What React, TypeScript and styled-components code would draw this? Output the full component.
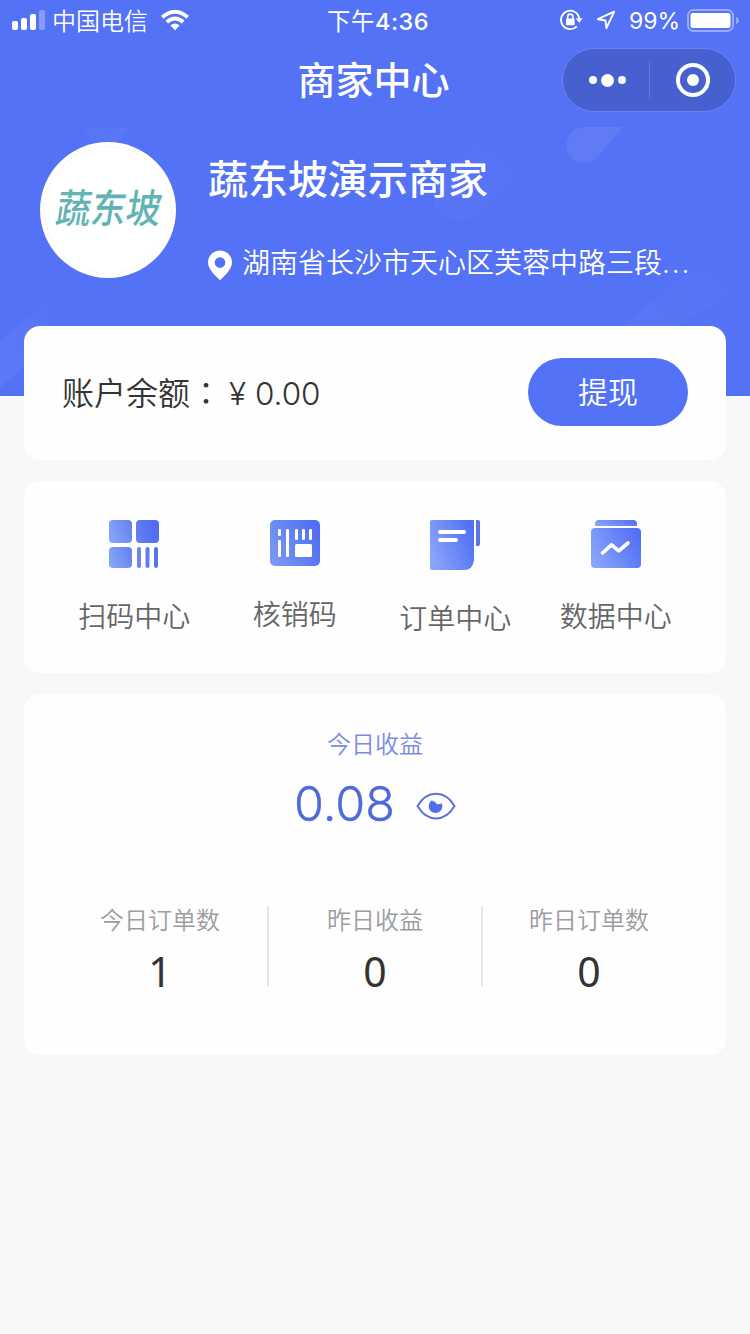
import React from "react";
import styled, { createGlobalStyle } from "styled-components";

const GlobalStyle = createGlobalStyle`
  * { box-sizing: border-box; }
  body { margin: 0; background: #f9f7fa; font-family: Inter, "Noto Sans CJK SC", sans-serif; }
`;

const Page = styled.div`
  width: 750px;
  min-height: 1334px;
  background: #f9f7fa;
`;

const Header = styled.header`
  position: relative;
  height: 396px;
  overflow: hidden;
  background: #5372f5;
  color: #fff;
`;

const Decoration = styled.svg`
  position: absolute;
  inset: 0;
`;

const StatusBar = styled.div`
  position: relative;
  display: grid;
  grid-template-columns: 1fr auto 1fr;
  align-items: center;
  height: 40px;
  padding: 0 11px 0 12px;
  font-size: 24px;
  line-height: 37px;
`;

const StatusGroup = styled.div<{ $end?: boolean }>`
  display: flex;
  align-items: center;
  justify-content: ${(p) => (p.$end ? "flex-end" : "flex-start")};
`;

const Carrier = styled.span`
  margin: 0 13px 0 7px;
  padding-top: 3px;
  font-weight: 350;
`;

const Clock = styled.span`
  padding: 3px 0 0 5px;
  font-size: 23.5px;
  font-weight: 400;
  letter-spacing: 0.5px;
`;

const ClockDigits = styled.span`
  font-weight: 500;
`;

const Percent = styled.span`
  margin: 0 7px 0 13px;
  padding-top: 3px;
  font-size: 23px;
  font-weight: 400;
`;

const NavBar = styled.div`
  position: relative;
  display: grid;
  grid-template-columns: 1fr auto 1fr;
  align-items: center;
  height: 80px;
  padding: 0 14px;
`;

const Title = styled.h1`
  grid-column: 2;
  margin: 0;
  padding-right: 3px;
  font-size: 38px;
  line-height: 80px;
  font-weight: 500;
`;

const Capsule = styled.div`
  justify-self: end;
  display: flex;
  align-items: center;
  width: 174px;
  height: 64px;
  border: 1px solid #6b84f3;
  border-radius: 32px;
  background: #4660d0;
`;

const CapsuleHalf = styled.div<{ $divided?: boolean }>`
  flex: none;
  display: flex;
  justify-content: center;
  align-items: center;
  gap: 4px;
  width: ${(p) => (p.$divided ? 87 : 85)}px;
  height: 38px;
  padding-left: ${(p) => (p.$divided ? "3px" : "0")};
  border-right: ${(p) => (p.$divided ? "1px solid #6179dc" : "0")};
`;

const Dot = styled.i<{ $size: number }>`
  width: ${(p) => p.$size}px;
  height: ${(p) => p.$size}px;
  border-radius: 50%;
  background: #fff;
`;

const Profile = styled.section`
  position: relative;
  display: flex;
  gap: 32px;
  padding: 22px 40px 0;
`;

const Avatar = styled.div`
  display: flex;
  align-items: center;
  justify-content: center;
  width: 136px;
  height: 136px;
  padding: 4px;
  border-radius: 50%;
  background: #fff;
`;

const AvatarInner = styled.div`
  width: 128px;
  height: 128px;
  border: 1px dashed #f3f0ee;
  border-radius: 50%;
  text-align: center;
`;

const Logo = styled.span`
  display: block;
  padding-left: 2px;
  color: #62b3b4;
  font-size: 35px;
  line-height: 122px;
  font-weight: 500;
  white-space: nowrap;
  transform: skewX(-9deg) scaleY(1.14);
`;

const ShopInfo = styled.div`
  display: flex;
  flex-direction: column;
`;

const ShopName = styled.h2`
  margin: 8px 0 0;
  font-size: 40px;
  line-height: 60px;
  font-weight: 500;
`;

const Address = styled.div`
  display: flex;
  align-items: center;
  gap: 10px;
  margin-top: 32px;
  font-size: 28px;
  line-height: 42px;
  font-weight: 350;
  white-space: nowrap;
`;

const Ellipsis = styled.span`
  letter-spacing: 1.8px;
`;

const Content = styled.main`
  position: relative;
  display: flex;
  flex-direction: column;
  gap: 21px;
  margin-top: -70px;
  padding: 0 24px;
`;

const Card = styled.section`
  border-radius: 16px;
  background: #fefefe;
`;

const BalanceCard = styled(Card)`
  display: flex;
  align-items: center;
  justify-content: space-between;
  height: 134px;
  padding: 0 38px 2px;
`;

const Balance = styled.div`
  color: #333;
  font-size: 32px;
  line-height: 48px;
  font-weight: 350;
  white-space: nowrap;
`;

const Colon = styled.span`
  font-family: "Noto Sans CJK TC", sans-serif;
`;

const Amount = styled.span`
  margin-left: 7px;
  font-size: 31.5px;
`;

const WithdrawButton = styled.button`
  width: 160px;
  height: 68px;
  padding: 0;
  border: 0;
  border-radius: 34px;
  background: #5372f5;
  color: #fff;
  font: 350 30px/68px Inter, "Noto Sans CJK SC", sans-serif;
`;

const MenuCard = styled(Card)`
  display: grid;
  grid-template-columns: repeat(4, 160.5px);
  justify-content: center;
  height: 192px;
  padding-top: 39px;
`;

const MenuItem = styled.div`
  display: flex;
  flex-direction: column;
  align-items: center;
  gap: 29px;
`;

const MenuLabel = styled.span`
  color: #666;
  font-size: 28px;
  line-height: 40px;
  font-weight: 350;
`;

const RevenueCard = styled(Card)`
  height: 361px;
  padding-top: 33px;
`;

const RevenueLabel = styled.div`
  color: #7b8cdc;
  font-size: 24px;
  line-height: 36px;
  font-weight: 350;
  text-align: center;
`;

const Revenue = styled.div`
  display: flex;
  align-items: center;
  justify-content: center;
  gap: 21px;
  height: 60px;
  margin-top: 10px;
  padding-top: 1px;
  color: #4d69dc;
  font-size: 48.5px;
  line-height: 60px;
  font-weight: 300;
  -webkit-text-stroke: 0.4px #4d69dc;
`;

const Stats = styled.div`
  display: grid;
  grid-template-columns: repeat(3, 214px);
  justify-content: center;
  margin-top: 73px;
  padding-right: 2px;
`;

const Stat = styled.div`
  display: flex;
  flex-direction: column;
  align-items: center;
  height: 80px;
  & + & { border-left: 2px solid #e6e5e8; }
`;

const StatLabel = styled.span`
  padding-top: 1px;
  color: #9c9c9e;
  font-size: 24px;
  line-height: 28px;
  font-weight: 350;
`;

const StatValue = styled.span`
  margin-top: 12px;
  color: #333;
  font-family: "Noto Sans", sans-serif;
  font-size: 41px;
  line-height: 48px;
  font-weight: 400;
`;

const Signal = () => (
  <svg width="33" height="20" viewBox="0 0 33 20" fill="#fff">
    <rect x="0" y="11" width="6" height="9" rx="2" />
    <rect x="9" y="8" width="6" height="12" rx="2" />
    <rect x="18" y="4" width="6" height="16" rx="2" />
    <rect x="27" y="0" width="6" height="20" rx="2" opacity=".3" />
  </svg>
);

const Wifi = () => (
  <svg width="28" height="21" viewBox="0 0 28 21" fill="none" stroke="#fff" strokeWidth="3.8">
    <path d="M1.3 7.3Q14-3.8 26.7 7.3" />
    <path d="M5.8 12Q14 4.8 22.2 12" />
    <path d="M9.4 15.6Q14 11.3 18.6 15.6L14 20.2Z" fill="#fff" stroke="none" />
  </svg>
);

const RotationLock = () => (
  <svg width="23" height="22" viewBox="0 0 23 22" fill="none" stroke="#fff" strokeWidth="1.8">
    <path d="M19.3 9.5A9.2 9.2 0 1 0 16.8 17.3" />
    <path d="M15.7 9.2h7L19.2 13.8Z" fill="#fff" stroke="none" />
    <rect x="6" y="9.5" width="8.6" height="6.7" rx="1" fill="#fff" stroke="none" />
    <path d="M7.7 10V7.7a2.6 2.6 0 0 1 5.2 0V10" strokeWidth="1.6" />
  </svg>
);

const LocationArrow = () => (
  <svg width="20" height="20" viewBox="0 0 20 20" fill="none" stroke="#fff" strokeWidth="1.9" strokeLinejoin="round" style={{ marginLeft: 13 }}>
    <path d="M18.2 1.6 1.8 9.2l7.7 1.3.9 7.7Z" />
  </svg>
);

const Battery = () => (
  <svg width="52" height="23" viewBox="0 0 52 23" fill="#fff">
    <rect x="1" y="1" width="45" height="21" rx="5.5" fill="none" stroke="#fff" strokeOpacity=".4" strokeWidth="2" />
    <rect x="3.5" y="4" width="40" height="15" rx="2.5" />
    <path d="M49 8Q52 9 52 11.5T49 15Z" opacity=".4" />
  </svg>
);

const Pin = () => (
  <svg width="24" height="31" viewBox="0 0 24 31" style={{ marginTop: 4 }}>
    <path fill="#fff" fillRule="evenodd" d="M12 .5A12 12 0 0 0 0 12.6C0 20 8.500 26.500 12 30.500 15.500 26.500 24 20 24 12.600A12 12 0 0 0 12 .5Zm0 6.800a5.300 5.300 0 1 1 0 10.600 5.300 5.300 0 0 1 0-10.600Z" />
  </svg>
);

const Target = () => (
  <svg width="34" height="34" viewBox="0 0 34 34">
    <circle cx="17" cy="17" r="15" fill="none" stroke="#fff" strokeWidth="4" />
    <circle cx="17" cy="17" r="6" fill="#fff" />
  </svg>
);

const Gradient = ({ id, from = "#89a5fa", to = "#5270f5" }: { id: string; from?: string; to?: string }) => (
  <defs>
    <linearGradient id={id} x1="0" y1=".7" x2="1" y2=".3">
      <stop stopColor={from} />
      <stop offset="1" stopColor={to} />
    </linearGradient>
  </defs>
);

const ScanIcon = () => (
  <svg width="52" height="48" viewBox="0 0 52 48">
    <Gradient id="scanLight" from="#86a6f8" to="#6684ee" />
    <Gradient id="scanDark" from="#6680f0" to="#4e68f2" />
    <rect x="1" y="0" width="23" height="23" rx="4" fill="url(#scanLight)" />
    <rect x="28" y="0" width="23" height="23" rx="4" fill="url(#scanDark)" />
    <rect x="1" y="27" width="23" height="21" rx="4" fill="url(#scanLight)" />
    <rect x="29" y="27" width="4" height="21" rx="2" fill="#6b87e9" />
    <rect x="37.500" y="27" width="4" height="21" rx="2" fill="#617ee7" />
    <rect x="46" y="27" width="4" height="21" rx="2" fill="#5874e8" />
  </svg>
);

const CodeIcon = () => (
  <svg width="50" height="46" viewBox="0 0 50 46">
    <Gradient id="code" from="#7898f4" to="#506df4" />
    <rect width="50" height="46" rx="5" fill="url(#code)" />
    <g fill="#fff">
      <rect x="8" y="9" width="3" height="7" rx="1.200" />
      <rect x="8" y="20" width="3" height="17" rx="1.200" />
      <rect x="16" y="9" width="3" height="28" rx="1.200" />
      <rect x="25" y="9" width="3" height="11" rx="1.200" />
      <rect x="32" y="9" width="3" height="11" rx="1.200" />
      <rect x="39" y="9" width="3" height="11" rx="1.200" />
      <rect x="25" y="24" width="17" height="13" rx="1.500" />
    </g>
  </svg>
);

const OrderIcon = () => (
  <svg width="50" height="50" viewBox="0 0 50 50">
    <Gradient id="order" />
    <path d="M2 0H44V40Q43 50 34 50H2Q0 50 0 48V2Q0 0 2 0Z" fill="url(#order)" />
    <path d="M46 0h2q2 0 2 2v22q0 2-2 2h-2Z" fill="#5874e8" />
    <path d="M10 12h24M10 20h16" stroke="#fff" strokeWidth="4" strokeLinecap="round" />
  </svg>
);

const DataIcon = () => (
  <svg width="50" height="48" viewBox="0 0 50 48">
    <Gradient id="data" />
    <path d="M4 6V4Q4 0 8 0H42Q46 0 46 4V6Z" fill="url(#data)" />
    <rect y="8" width="50" height="40" rx="4" fill="url(#data)" />
    <path d="m11.500 33 9-8.200 7.200 6L37 23" fill="none" stroke="#fff" strokeWidth="3.600" strokeLinecap="round" strokeLinejoin="round" />
  </svg>
);

const Eye = () => (
  <svg width="40" height="28" viewBox="0 0 40 28" style={{ marginTop: 4 }}>
    <path d="M1.500 14C11-2.500 29-2.500 38.500 14 29 30.500 11 30.500 1.500 14Z" fill="none" stroke="#5a72d8" strokeWidth="2" strokeLinejoin="round" />
    <path d="M16 8.300Q17.500 10.500 18.800 9.200 20.500 14 25.700 11.300A6.800 6.800 0 1 1 16 8.300Z" fill="#4f6de6" />
  </svg>
);

const menu = [
  { label: "扫码中心", icon: <ScanIcon /> },
  { label: "核销码", icon: <CodeIcon /> },
  { label: "订单中心", icon: <OrderIcon /> },
  { label: "数据中心", icon: <DataIcon /> },
];

const stats = [
  { label: "今日订单数", value: "1" },
  { label: "昨日收益", value: "0" },
  { label: "昨日订单数", value: "0" },
];

export default function App() {
  return (
    <>
      <GlobalStyle />
      <Page>
        <Header>
          <Decoration width="750" height="396" viewBox="0 0 750 396">
            <defs>
              <linearGradient id="drop" x1="0" y1="1" x2="1" y2="0">
                <stop stopColor="#fff" stopOpacity=".08" />
                <stop offset="1" stopColor="#fff" stopOpacity=".01" />
              </linearGradient>
            </defs>
            <path d="M585 127H623L600 154A18 18 0 1 1 585 127Z" fill="#fff" opacity=".07" />
            <path d="M490 127H562L480 213Q457 228 435 209L432 190Z" fill="url(#drop)" opacity=".35" />
            <path d="M84 128H130L118 142H92Z" fill="#fff" opacity=".03" />
            <path d="M735 236V292L678 326H624L646 306Z" fill="url(#drop)" opacity=".4" />
            <path d="M0 340 50 300V346L0 387Z" fill="url(#drop)" opacity=".8" />
          </Decoration>
          <StatusBar>
            <StatusGroup>
              <Signal />
              <Carrier>中国电信</Carrier>
              <Wifi />
            </StatusGroup>
            <Clock>
              下午<ClockDigits>4:36</ClockDigits>
            </Clock>
            <StatusGroup $end>
              <RotationLock />
              <LocationArrow />
              <Percent>99%</Percent>
              <Battery />
            </StatusGroup>
          </StatusBar>
          <NavBar>
            <Title>商家中心</Title>
            <Capsule>
              <CapsuleHalf $divided>
                <Dot $size={8} />
                <Dot $size={13} />
                <Dot $size={8} />
              </CapsuleHalf>
              <CapsuleHalf>
                <Target />
              </CapsuleHalf>
            </Capsule>
          </NavBar>
          <Profile>
            <Avatar>
              <AvatarInner>
                <Logo>蔬东坡</Logo>
              </AvatarInner>
            </Avatar>
            <ShopInfo>
              <ShopName>蔬东坡演示商家</ShopName>
              <Address>
                <Pin />
                <span>
                  湖南省长沙市天心区芙蓉中路三段<Ellipsis>...</Ellipsis>
                </span>
              </Address>
            </ShopInfo>
          </Profile>
        </Header>
        <Content>
          <BalanceCard>
            <Balance>
              账户余额<Colon lang="zh-TW">：</Colon>
              <Amount>¥ 0.00</Amount>
            </Balance>
            <WithdrawButton>提现</WithdrawButton>
          </BalanceCard>
          <MenuCard>
            {menu.map((m) => (
              <MenuItem key={m.label}>
                {m.icon}
                <MenuLabel>{m.label}</MenuLabel>
              </MenuItem>
            ))}
          </MenuCard>
          <RevenueCard>
            <RevenueLabel>今日收益</RevenueLabel>
            <Revenue>
              <span>0.08</span>
              <Eye />
            </Revenue>
            <Stats>
              {stats.map((s) => (
                <Stat key={s.label}>
                  <StatLabel>{s.label}</StatLabel>
                  <StatValue>{s.value}</StatValue>
                </Stat>
              ))}
            </Stats>
          </RevenueCard>
        </Content>
      </Page>
    </>
  );
}
